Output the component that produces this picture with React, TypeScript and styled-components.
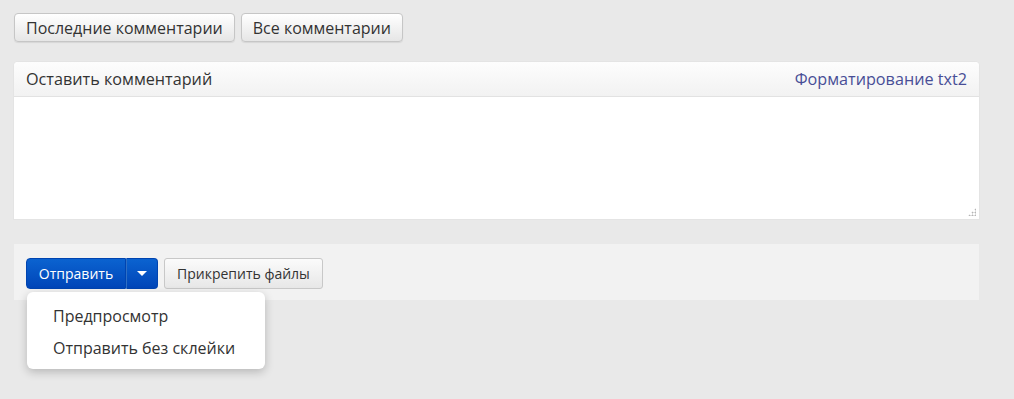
import styled, { createGlobalStyle } from 'styled-components';

const GlobalStyle = createGlobalStyle`
  html, body {
    margin: 0;
    padding: 0;
    background: #e9e9e9;
    font-family: "Open Sans", "Liberation Sans", sans-serif;
    color: #333;
  }
`;

const Page = styled.div`
  min-height: 100vh;
  box-sizing: border-box;
  padding: 13px 35px 30px 14px;
  display: flex;
  flex-direction: column;
`;

const Tabs = styled.div`
  display: flex;
  gap: 6px;
  margin-bottom: 20px;
`;

const TabButton = styled.button`
  height: 29px;
  padding: 0 11px;
  font: 16px "Open Sans", "Liberation Sans", sans-serif;
  color: #333;
  background: linear-gradient(#ffffff, #e6e6e6);
  border: 1px solid #c6c6c6;
  border-radius: 4px;
  box-shadow: 0 1px 1px rgba(0, 0, 0, 0.08);
`;

const Panel = styled.div`
  background: #fff;
  border-radius: 4px 4px 0 0;
  box-shadow: 0 0 0 1px rgba(0, 0, 0, 0.02);
`;

const PanelHeader = styled.div`
  height: 34px;
  display: flex;
  align-items: center;
  justify-content: space-between;
  padding: 0 12px;
  background: linear-gradient(#fdfdfd, #f2f2f2);
  border-bottom: 1px solid #e2e2e2;
  border-radius: 4px 4px 0 0;
  font-size: 16.2px;
`;

const FormatLink = styled.a`
  color: #484e96;
  text-decoration: none;
`;

const AreaWrap = styled.div`
  position: relative;

  &::after {
    content: '';
    position: absolute;
    right: 3px;
    bottom: 3px;
    width: 8px;
    height: 8px;
    background:
      radial-gradient(circle, #b5b5b5 0.9px, transparent 1.1px) 0 0 / 3px 3px;
    clip-path: polygon(100% 0, 100% 100%, 0 100%);
    pointer-events: none;
  }
`;

const CommentArea = styled.textarea`
  display: block;
  width: 100%;
  height: 122px;
  box-sizing: border-box;
  border: none;
  outline: none;
  resize: none;
  background: #fff;
  padding: 8px 12px;
  font: 14px "Open Sans", "Liberation Sans", sans-serif;
`;

const Footer = styled.div`
  margin-top: 25px;
  background: #f2f2f2;
  padding: 14px 12px 11px;
  display: flex;
  gap: 6px;
`;

const SplitWrap = styled.div`
  position: relative;
  display: flex;
`;

const BlueButton = styled.button<{ $caret?: boolean }>`
  height: 31px;
  width: ${({ $caret }) => ($caret ? '32px' : '100px')};
  display: flex;
  align-items: center;
  justify-content: center;
  font: 14px "Open Sans", "Liberation Sans", sans-serif;
  color: #fff;
  background: linear-gradient(#0b63d0, #0045b8);
  border: 1px solid #0044b0;
  border-left: ${({ $caret }) => ($caret ? '1px solid #2f6fc4' : '1px solid #0044b0')};
  border-radius: ${({ $caret }) => ($caret ? '0 4px 4px 0' : '4px 0 0 4px')};
  padding: 0;
`;

const Caret = styled.span`
  width: 0;
  height: 0;
  border-left: 5px solid transparent;
  border-right: 5px solid transparent;
  border-top: 5px solid #fff;
`;

const GrayButton = styled.button`
  height: 31px;
  padding: 0 12px;
  font: 14px "Open Sans", "Liberation Sans", sans-serif;
  color: #333;
  background: linear-gradient(#fbfbfb, #e7e7e7);
  border: 1px solid #c8c8c8;
  border-radius: 3px;
`;

const Menu = styled.ul`
  position: absolute;
  top: 34px;
  left: 1px;
  width: 238px;
  height: 77px;
  box-sizing: border-box;
  margin: 0;
  padding: 8px 0 5px;
  list-style: none;
  background: #fff;
  border-radius: 6px;
  box-shadow: 0 3px 10px rgba(0, 0, 0, 0.22);
  z-index: 2;
`;

const MenuItem = styled.li`
  padding: 2px 26px;
  line-height: 28px;
  font-size: 16px;
  color: #333;
  white-space: nowrap;
`;

export default function App() {
  return (
    <>
      <GlobalStyle />
      <Page>
        <Tabs>
          <TabButton>Последние комментарии</TabButton>
          <TabButton>Все комментарии</TabButton>
        </Tabs>
        <Panel>
          <PanelHeader>
            <span>Оставить комментарий</span>
            <FormatLink href="#">Форматирование txt2</FormatLink>
          </PanelHeader>
          <AreaWrap>
            <CommentArea />
          </AreaWrap>
        </Panel>
        <Footer>
          <SplitWrap>
            <BlueButton>Отправить</BlueButton>
            <BlueButton $caret>
              <Caret />
            </BlueButton>
            <Menu>
              <MenuItem>Предпросмотр</MenuItem>
              <MenuItem>Отправить без склейки</MenuItem>
            </Menu>
          </SplitWrap>
          <GrayButton>Прикрепить файлы</GrayButton>
        </Footer>
      </Page>
    </>
  );
}
